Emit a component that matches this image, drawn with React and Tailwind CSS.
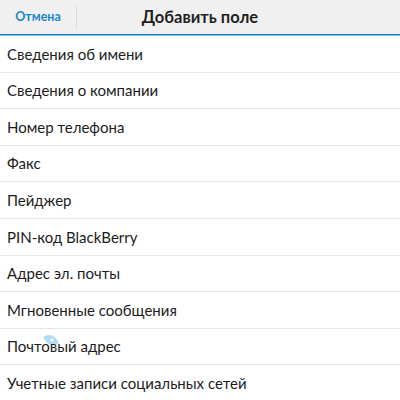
const items = [
  'Сведения об имени',
  'Сведения о компании',
  'Номер телефона',
  'Факс',
  'Пейджер',
  'PIN-код BlackBerry',
  'Адрес эл. почты',
  'Мгновенные сообщения',
  'Почтовый адрес',
  'Учетные записи социальных сетей',
]

// faint site watermark that sits over the "Почтовый адрес" row
function Watermark() {
  return (
    <svg className="absolute left-[41px] top-[5px] pointer-events-none opacity-70" width="20" height="12" viewBox="0 0 20 12">
      <path d="M2 3 Q8 -1 14 3 L18 9 Q12 12 6 9 Z" fill="#8fd0ee" />
      <circle cx="11" cy="6" r="1.6" fill="#fff" />
    </svg>
  )
}

export default function App() {
  return (
    <div className="w-[400px] h-[400px] overflow-hidden bg-white font-['Lato',sans-serif] text-[#1c1c1c]">
      <header className="h-[34px] bg-[#f0f0f0] flex items-center relative">
        <div className="w-[76px] h-full flex items-center justify-center text-[12.5px] font-bold text-[#1b86c7]">
          Отмена
        </div>
        <div className="w-px h-[24px] bg-[#dcdcdc]" />
        <h1 className="absolute left-0 right-0 text-center text-[16.5px] font-bold text-[#222] pointer-events-none">
          Добавить поле
        </h1>
      </header>
      <div className="h-[2px] bg-[#1d78b0] border-b border-[#7fc0e6]" />
      <ul>
        {items.map((t) => (
          <li key={t} className="relative h-[36.6px] border-b border-[#e6e6e6] flex items-center px-[7px] text-[15px]">
            {t === 'Почтовый адрес' && <Watermark />}
            <span className="relative">{t}</span>
          </li>
        ))}
      </ul>
    </div>
  )
}
